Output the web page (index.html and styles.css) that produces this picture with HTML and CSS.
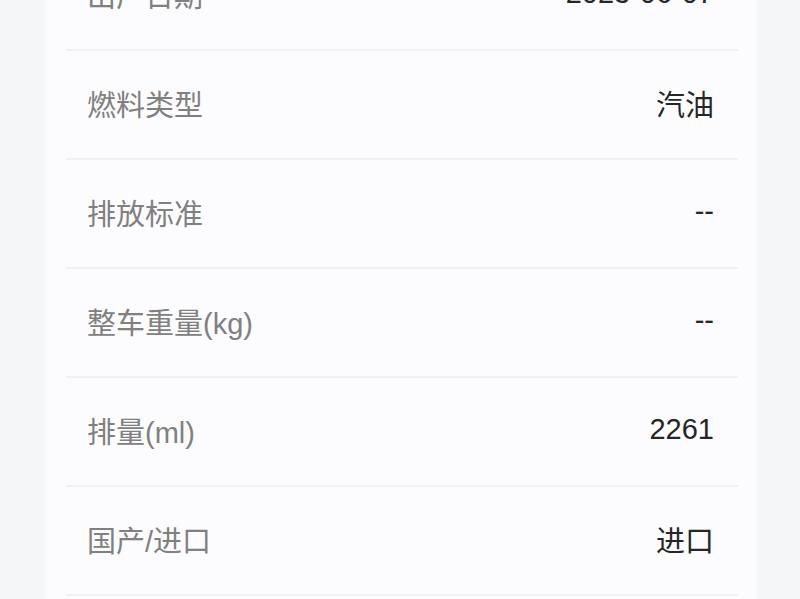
FILE: index.html
```html
<!DOCTYPE html>
<html lang="zh-CN">
<head>
<meta charset="utf-8">
<link rel="stylesheet" href="styles.css">
</head>
<body>
<div class="card">
  <div class="row"><span class="label">出厂日期</span><span class="value">2023-06-07</span></div>
  <div class="row"><span class="label">燃料类型</span><span class="value">汽油</span></div>
  <div class="row"><span class="label">排放标准</span><span class="value">--</span></div>
  <div class="row"><span class="label">整车重量(kg)</span><span class="value">--</span></div>
  <div class="row"><span class="label">排量(ml)</span><span class="value">2261</span></div>
  <div class="row"><span class="label">国产/进口</span><span class="value">进口</span></div>
</div>
</body>
</html>
```

FILE: styles.css
```css
html, body {
  margin: 0;
  padding: 0;
  background: #f5f6f8;
  overflow: hidden;
}
body {
  height: 599px;
  font-family: "Liberation Sans", "Noto Sans CJK SC", sans-serif;
}
.card {
  margin: -58px 0 0 45px;
  width: 712px;
  min-height: 700px;
  box-sizing: border-box;
  padding: 0 19px 0 21px;
  background: #fcfcfe;
}
.row {
  height: 103px;
  box-sizing: content-box;
  display: flex;
  align-items: center;
  justify-content: space-between;
  padding: 0 24px 4px 21px;
  border-bottom: 2px solid #f1f1f4;
  font-size: 29px;
}
.label {
  color: #808080;
}
.value {
  color: #262626;
}
```
